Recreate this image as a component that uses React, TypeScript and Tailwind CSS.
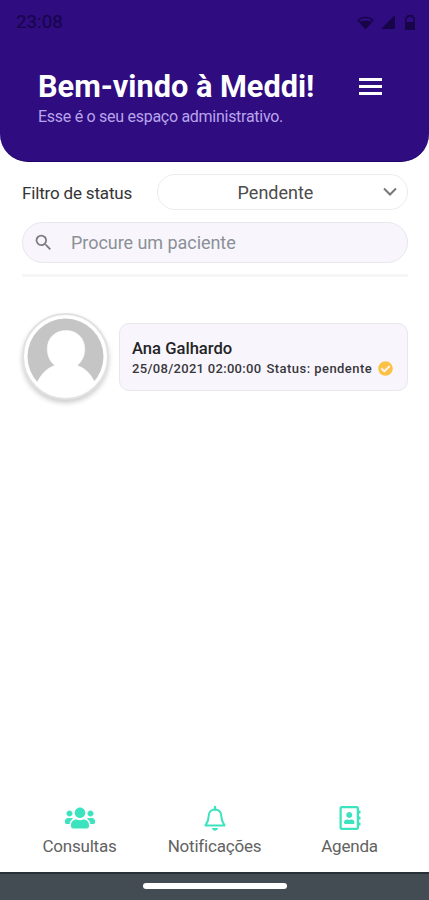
import type { ReactNode } from "react";
import { FaUsers, FaRegAddressBook, FaCheckCircle } from "react-icons/fa";
import { MdSearch } from "react-icons/md";

const patients = [
  { name: "Ana Galhardo", date: "25/08/2021 02:00:00", status: "pendente" },
];

function StatusBar() {
  return (
    <div className="flex h-11 items-center justify-between pl-4 pr-[14px] text-[#170449]">
      <span className="mt-px text-[18.8px] leading-none">23:08</span>
      <div className="flex items-center gap-[7px]">
        <svg width="17" height="13" viewBox="0 0 17 13" fill="none">
          <path d="M1 4C5 .4 12 .4 16 4L8.500 12.500Z" stroke="currentColor" strokeWidth="1.200" />
          <path d="M2.500 6C6 4.300 11 4.300 14.500 6L8.500 12.500Z" fill="currentColor" />
        </svg>
        <svg width="14" height="14" viewBox="0 0 14 14" fill="currentColor">
          <path d="M14 0V14H0Z" />
        </svg>
        <svg className="ml-[3px]" width="10" height="15" viewBox="0 0 10 15" fill="none">
          <path d="M3 2V.8H7V2H8L9.300 3.300V14.300H.7V3.300L2 2Z" stroke="currentColor" strokeWidth="1.400" />
          <path d="M1 7H9V14H1Z" fill="currentColor" />
        </svg>
      </div>
    </div>
  );
}

function Header() {
  return (
    <header className="h-[162px] rounded-b-[28px] border-b border-[#1c0368] bg-[#2f0c7f]">
      <StatusBar />
      <div className="flex justify-between pl-[38px] pr-[47px] pt-[26px]">
        <div>
          <h1 className="whitespace-nowrap text-[30.7px] font-bold leading-[34px] text-white">
            Bem-vindo à Meddi!
          </h1>
          <p className="mt-[2px] whitespace-nowrap text-[16px] leading-[22px] tracking-[-0.28px] text-[#b9a4ec]">
            Esse é o seu espaço administrativo.
          </p>
        </div>
        <svg className="mt-[8px] text-white" width="23" height="17" viewBox="0 0 23 17">
          <path d="M0 0H23V3H0ZM0 7H23V10H0ZM0 14H23V17H0Z" fill="currentColor" />
        </svg>
      </div>
    </header>
  );
}

function Filters() {
  return (
    <section className="ml-[22px] mr-[21px] border-b-[3px] border-[#f6f6f7] pb-[11px] pt-[12px]">
      <div className="flex items-center justify-between">
        <span className="mt-[3px] whitespace-nowrap text-[17px] tracking-[-0.17px] text-[#343434]">
          Filtro de status
        </span>
        <button className="relative flex h-[36px] w-[251px] items-center justify-center rounded-full border border-[#ececef] pr-[14px] pt-px text-[18px] text-[#4c4c4c]">
          Pendente
          <svg
            className="absolute right-[10px] top-[12px] text-[#777]"
            width="14"
            height="10"
            viewBox="0 0 14 10"
            fill="none"
          >
            <path d="M1 1.500L7 7.500L13 1.500" stroke="currentColor" strokeWidth="2" />
          </svg>
        </button>
      </div>
      <div className="mt-[12px] flex h-[41px] items-center rounded-full border border-[#e7e7ec] bg-[#f8f6fc] pl-[10px]">
        <MdSearch className="size-[21px] text-[#7c7c80]" />
        <span className="ml-[17px] whitespace-nowrap text-[18px] tracking-[-0.05px] text-[#8b9097]">
          Procure um paciente
        </span>
      </div>
    </section>
  );
}

function Avatar() {
  return (
    <div className="flex size-[87px] shrink-0 items-center justify-center rounded-full border-2 border-[#e2e2e2] bg-white shadow-[0_3px_5px_rgba(0,0,0,0.2)]">
      <svg width="78" height="78" viewBox="0 0 78 78">
        <circle cx="38.500" cy="38.500" r="38" fill="#c5c5c5" />
        <path
          d="M39 12.500C28 12.500 20.300 20 20.300 31C20.300 38 23 43.500 28 47.500C20 50 14 56 10 65A39 39 0 0 0 68 65C64 56 58 50 50 47.500C55 43.500 57.700 38 57.700 31C57.700 20 50 12.500 39 12.500Z"
          fill="#fff"
          stroke="#fff"
          strokeWidth="0.500"
        />
      </svg>
    </div>
  );
}

function PatientCard({ name, date, status }: { name: string; date: string; status: string }) {
  return (
    <li className="flex items-center gap-[10px]">
      <Avatar />
      <div className="h-[68px] flex-1 rounded-[10px] border border-[#e8e7ec] bg-[#f8f6fc] pl-[12px] pt-[15px]">
        <p className="whitespace-nowrap text-[16.6px] font-medium leading-[20px] text-[#242427]">
          {name}
        </p>
        <div className="flex items-center whitespace-nowrap text-[13px] font-medium leading-[20px] text-[#38383c]">
          <span className="w-[134.5px] tracking-[0.3px]">{date}</span>
          <span className="tracking-[0.45px]">Status: {status}</span>
          <FaCheckCircle className="ml-[6px] size-[15px] text-[#fbc246]" />
        </div>
      </div>
    </li>
  );
}

function BellIcon() {
  return (
    <svg width="22" height="25" viewBox="0 0 22 25" fill="none">
      <path d="M11 1V3.500" stroke="currentColor" strokeWidth="2.400" strokeLinecap="round" />
      <path
        d="M11 3.500C7 3.500 4.700 6.400 4.700 10C4.700 14.500 3.400 16.500 1.500 19.500H20.500C18.600 16.500 17.300 14.500 17.300 10C17.300 6.400 15 3.500 11 3.500Z"
        stroke="currentColor"
        strokeWidth="2"
        strokeLinejoin="round"
      />
      <path d="M7.800 22H14.200C13.700 23.500 12.500 24.700 11 24.700S8.300 23.500 7.800 22Z" fill="currentColor" />
    </svg>
  );
}

function NavItem({ icon, label }: { icon: ReactNode; label: string }) {
  return (
    <a className="flex w-[135px] flex-col items-center text-[17px] leading-[22px] tracking-[-0.2px] text-[#626262]">
      <span className="mb-[3px] flex h-[28px] items-center text-[#3ce3bf]">{icon}</span>
      {label}
    </a>
  );
}

export default function App() {
  return (
    <div className="flex h-[900px] w-[429px] flex-col overflow-hidden bg-white font-['Roboto',sans-serif]">
      <Header />
      <Filters />
      <ul className="ml-[22px] mr-[21px] mt-[36px] flex-1">
        {patients.map((patient) => (
          <PatientCard key={patient.name} {...patient} />
        ))}
      </ul>
      <nav className="flex h-[68px] justify-center">
        <NavItem icon={<FaUsers className="size-[30px]" />} label="Consultas" />
        <NavItem icon={<BellIcon />} label="Notificações" />
        <NavItem icon={<FaRegAddressBook className="size-[24px]" />} label="Agenda" />
      </nav>
      <div className="flex h-[28px] justify-center border-t-2 border-[#273035] bg-[#444c53] pt-[9px]">
        <div className="h-[6px] w-[144px] rounded-full bg-white" />
      </div>
    </div>
  );
}
